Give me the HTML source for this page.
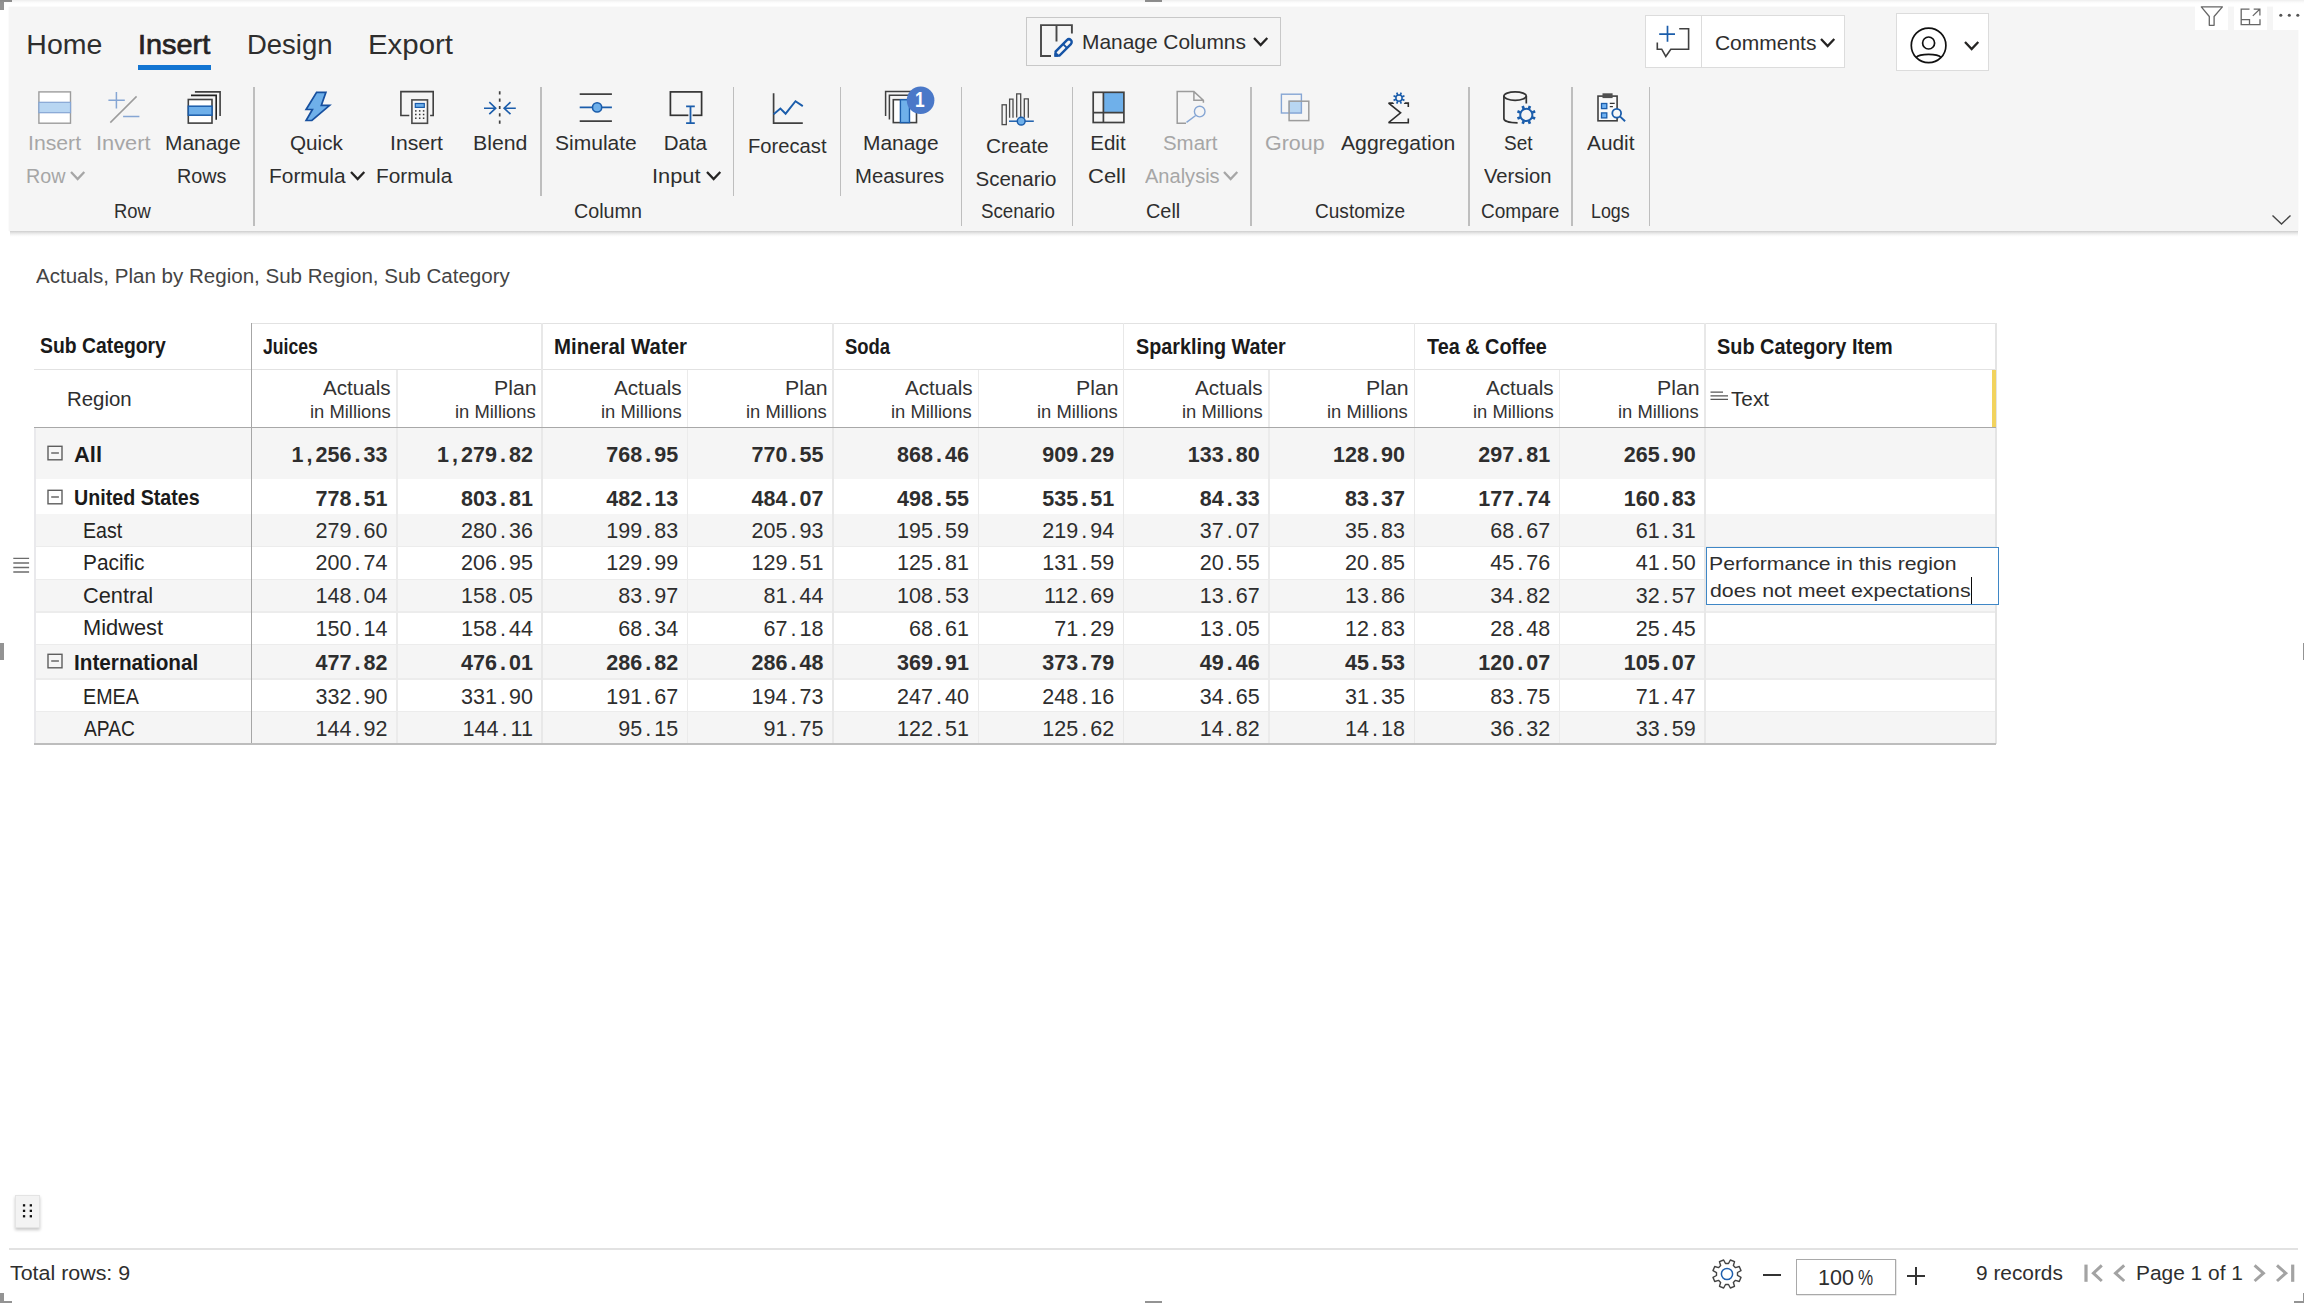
<!DOCTYPE html>
<html lang="en"><head><meta charset="utf-8"><title>Inforiver</title><style>
html,body{margin:0;padding:0;background:#fff;}
body{width:2304px;height:1303px;position:relative;overflow:hidden;font-family:"Liberation Sans",sans-serif;color:#2e2e2e;}
.t{position:absolute;white-space:pre;line-height:1;transform-origin:0 0;}
.b{position:absolute;box-sizing:border-box;}
.p{display:inline-block;width:12px;text-align:center;}
.n{position:absolute;white-space:pre;line-height:1;font-size:21.5px;text-align:right;letter-spacing:0.04px;}
.nb{font-weight:bold;}
</style></head><body>
<div class="b" style="left:0px;top:0px;width:12px;height:1.8px;background:#939393"></div>
<div class="b" style="left:0px;top:0px;width:3.8px;height:10px;background:#939393"></div>
<div class="b" style="left:1145px;top:0px;width:17px;height:2px;background:#939393"></div>
<div class="b" style="left:1145px;top:1301px;width:17px;height:2px;background:#939393"></div>
<div class="b" style="left:0px;top:643px;width:3.6px;height:17px;background:#939393"></div>
<div class="b" style="left:2303px;top:643px;width:1px;height:17px;background:#939393"></div>
<div class="b" style="left:0px;top:1301px;width:12px;height:2px;background:#939393"></div>
<div class="b" style="left:0px;top:1293px;width:3.8px;height:10px;background:#939393"></div>
<div class="b" style="left:2294.4px;top:1301px;width:9.6px;height:2px;background:#939393"></div>
<div class="b" style="left:2303px;top:1293px;width:1px;height:10px;background:#939393"></div>
<div class="b" style="left:9px;top:7px;width:2289px;height:224px;background:#f5f5f5;box-shadow:0 0 1px rgba(0,0,0,.10);"></div>
<div class="b" style="left:9.5px;top:231px;width:2288px;height:6px;background:linear-gradient(#cdcdcd,#dedede 22%,#efefef 50%,#fbfbfb 80%,#fff)"></div>
<div class="b" style="left:2195px;top:0px;width:33px;height:30px;background:#fff"></div>
<div class="b" style="left:2234px;top:0px;width:33px;height:30px;background:#fff"></div>
<div class="b" style="left:2273px;top:0px;width:31px;height:30px;background:#fff"></div>
<div class="b" style="left:0px;top:0px;width:2304px;height:4px;background:linear-gradient(rgba(0,0,0,.065),rgba(0,0,0,.02) 50%,rgba(0,0,0,0))"></div>
<span class="t" style="left:26.31px;top:30px;font-size:28.5px;">Home</span>
<span class="t" style="left:137.97px;top:30px;font-size:28.5px;color:#262322;transform:scaleX(1.0131);-webkit-text-stroke:0.7px #262322;">Insert</span>
<span class="t" style="left:247.38px;top:30px;font-size:28.5px;transform:scaleX(0.9634);">Design</span>
<span class="t" style="left:367.73px;top:30px;font-size:28.5px;transform:scaleX(1.0312);">Export</span>
<div class="b" style="left:138px;top:65px;width:73px;height:5px;background:#1375d2"></div>
<div class="b" style="left:253.2px;top:86.5px;width:1.7px;height:139.5px;background:#bebebe"></div>
<div class="b" style="left:960.7px;top:86.5px;width:1.7px;height:139.5px;background:#bebebe"></div>
<div class="b" style="left:1071.7px;top:86.5px;width:1.7px;height:139.5px;background:#bebebe"></div>
<div class="b" style="left:1250.2px;top:86.5px;width:1.7px;height:139.5px;background:#bebebe"></div>
<div class="b" style="left:1468.2px;top:86.5px;width:1.7px;height:139.5px;background:#bebebe"></div>
<div class="b" style="left:1571.2px;top:86.5px;width:1.7px;height:139.5px;background:#bebebe"></div>
<div class="b" style="left:1648.7px;top:86.5px;width:1.7px;height:139.5px;background:#bebebe"></div>
<div class="b" style="left:540.2px;top:86.5px;width:1.7px;height:109px;background:#bebebe"></div>
<div class="b" style="left:732.7px;top:86.5px;width:1.7px;height:109px;background:#bebebe"></div>
<div class="b" style="left:839.5px;top:86.5px;width:1.7px;height:109px;background:#bebebe"></div>
<span class="t" style="left:27.64px;top:133px;font-size:20.5px;color:#a6a6a6;transform:scaleX(1.0344);">Insert</span>
<span class="t" style="left:25.56px;top:166px;font-size:20.5px;color:#a6a6a6;transform:scaleX(0.9620);">Row</span>
<svg class="b" style="left:68.6px;top:169.6px" width="17.3" height="11.4" viewBox="0 0 17.3 11.4" fill="none"><path d="M2 2 L8.65 9.0 L15.3 2" stroke="#a6a6a6" stroke-width="2.3" stroke-linecap="butt" stroke-linejoin="miter"/></svg>
<span class="t" style="left:95.69px;top:133px;font-size:20.5px;color:#a6a6a6;transform:scaleX(1.0628);">Invert</span>
<span class="t" style="left:165.27px;top:133px;font-size:20.5px;transform:scaleX(1.0196);">Manage</span>
<span class="t" style="left:176.76px;top:166px;font-size:20.5px;transform:scaleX(0.9653);">Rows</span>
<span class="t" style="left:114.17px;top:201px;font-size:20.5px;transform:scaleX(0.8962);">Row</span>
<span class="t" style="left:289.99px;top:133px;font-size:20.5px;transform:scaleX(1.0078);">Quick</span>
<span class="t" style="left:268.67px;top:166px;font-size:20.5px;transform:scaleX(1.0190);">Formula</span>
<svg class="b" style="left:349.3px;top:169.6px" width="17.3" height="11.4" viewBox="0 0 17.3 11.4" fill="none"><path d="M2 2 L8.65 9.0 L15.3 2" stroke="#252423" stroke-width="2.3" stroke-linecap="butt" stroke-linejoin="miter"/></svg>
<span class="t" style="left:390.04px;top:133px;font-size:20.5px;transform:scaleX(1.0324);">Insert</span>
<span class="t" style="left:376.48px;top:166px;font-size:20.5px;transform:scaleX(1.0149);">Formula</span>
<span class="t" style="left:472.74px;top:133px;font-size:20.5px;transform:scaleX(1.0384);">Blend</span>
<span class="t" style="left:554.98px;top:133px;font-size:20.5px;transform:scaleX(1.0256);">Simulate</span>
<span class="t" style="left:663.70px;top:133px;font-size:20.5px;">Data</span>
<span class="t" style="left:651.98px;top:166px;font-size:20.5px;transform:scaleX(1.0641);">Input</span>
<svg class="b" style="left:705.0px;top:169.6px" width="17.3" height="11.4" viewBox="0 0 17.3 11.4" fill="none"><path d="M2 2 L8.65 9.0 L15.3 2" stroke="#252423" stroke-width="2.3" stroke-linecap="butt" stroke-linejoin="miter"/></svg>
<span class="t" style="left:574.34px;top:201px;font-size:20.5px;transform:scaleX(0.9605);">Column</span>
<span class="t" style="left:747.82px;top:136px;font-size:20.5px;transform:scaleX(0.9846);">Forecast</span>
<span class="t" style="left:863.17px;top:133px;font-size:20.5px;transform:scaleX(1.0209);">Manage</span>
<span class="t" style="left:854.81px;top:166px;font-size:20.5px;transform:scaleX(0.9909);">Measures</span>
<span class="t" style="left:986.28px;top:136px;font-size:20.5px;transform:scaleX(1.0168);">Create</span>
<span class="t" style="left:975.50px;top:169px;font-size:20.5px;">Scenario</span>
<span class="t" style="left:980.58px;top:201px;font-size:20.5px;transform:scaleX(0.9141);">Scenario</span>
<span class="t" style="left:1090.30px;top:133px;font-size:20.5px;">Edit</span>
<span class="t" style="left:1087.83px;top:166px;font-size:20.5px;transform:scaleX(1.0727);">Cell</span>
<span class="t" style="left:1145.83px;top:201px;font-size:20.5px;transform:scaleX(0.9697);">Cell</span>
<span class="t" style="left:1163.00px;top:133px;font-size:20.5px;color:#a6a6a6;transform:scaleX(0.9963);">Smart</span>
<span class="t" style="left:1145.30px;top:166px;font-size:20.5px;color:#a6a6a6;transform:scaleX(0.9775);">Analysis</span>
<svg class="b" style="left:1222.2px;top:169.6px" width="17.3" height="11.4" viewBox="0 0 17.3 11.4" fill="none"><path d="M2 2 L8.65 9.0 L15.3 2" stroke="#a6a6a6" stroke-width="2.3" stroke-linecap="butt" stroke-linejoin="miter"/></svg>
<span class="t" style="left:1265.35px;top:133px;font-size:20.5px;color:#a6a6a6;transform:scaleX(1.0453);">Group</span>
<span class="t" style="left:1341.40px;top:133px;font-size:20.5px;transform:scaleX(1.0329);">Aggregation</span>
<span class="t" style="left:1315.47px;top:201px;font-size:20.5px;transform:scaleX(0.9294);">Customize</span>
<span class="t" style="left:1504.47px;top:133px;font-size:20.5px;transform:scaleX(0.9262);">Set</span>
<span class="t" style="left:1484.30px;top:166px;font-size:20.5px;transform:scaleX(0.9851);">Version</span>
<span class="t" style="left:1481.37px;top:201px;font-size:20.5px;transform:scaleX(0.9284);">Compare</span>
<span class="t" style="left:1587.30px;top:133px;font-size:20.5px;transform:scaleX(1.0150);">Audit</span>
<span class="t" style="left:1591.21px;top:201px;font-size:20.5px;transform:scaleX(0.8697);">Logs</span>
<div class="b" style="left:1026px;top:16.5px;width:254.5px;height:49.5px;border:1px solid #c8c8c8;background:#f5f5f5"></div>
<span class="t" style="left:1082.21px;top:31px;font-size:21px;transform:scaleX(0.9957);">Manage Columns</span>
<svg class="b" style="left:1252.2px;top:35.5px" width="17.3" height="11.4" viewBox="0 0 17.3 11.4" fill="none"><path d="M2 2 L8.65 9.0 L15.3 2" stroke="#252423" stroke-width="2.3" stroke-linecap="butt" stroke-linejoin="miter"/></svg>
<div class="b" style="left:1645.2px;top:15.3px;width:199.8px;height:53px;border:1px solid #dcdcdc;background:#fff"></div>
<div class="b" style="left:1701px;top:16px;width:1.2px;height:51.5px;background:#dcdcdc"></div>
<span class="t" style="left:1714.90px;top:32px;font-size:21px;">Comments</span>
<svg class="b" style="left:1819.3px;top:37.3px" width="17.3" height="11.4" viewBox="0 0 17.3 11.4" fill="none"><path d="M2 2 L8.65 9.0 L15.3 2" stroke="#252423" stroke-width="2.3" stroke-linecap="butt" stroke-linejoin="miter"/></svg>
<div class="b" style="left:1896px;top:13.2px;width:93px;height:57.4px;border:1px solid #dcdcdc;background:#fff"></div>
<svg class="b" style="left:1963.0px;top:39.7px" width="17.3" height="11.4" viewBox="0 0 17.3 11.4" fill="none"><path d="M2 2 L8.65 9.0 L15.3 2" stroke="#252423" stroke-width="2.3" stroke-linecap="butt" stroke-linejoin="miter"/></svg>
<svg class="b" style="left:2270px;top:212px" width="24" height="16" viewBox="0 0 24 16" fill="none"><path d="M2.5 3.5 L11.5 12 L20.5 3.5" stroke="#444" stroke-width="1.4"/></svg>
<svg class="b" style="left:0px;top:0px" width="2304" height="240" viewBox="0 0 2304 240" fill="none"><rect x="38.9" y="91.9" width="31.6" height="31.3" stroke="#9c9c9c" stroke-width="1.4" fill="#fff"/><rect x="38.9" y="102.3" width="31.6" height="10.4" stroke="#86a6d4" stroke-width="1.2" fill="#b8d6f2"/><path d="M108.4 100.2H124.8 M116.4 92.1V108.5 M123.1 116.6H139.4" stroke="#86a6d4" stroke-width="1.5" fill="none" /><path d="M110.3 122.6L136.6 96.4" stroke="#9c9c9c" stroke-width="1.5" fill="none" /><path d="M194.9 91.9H220.1V116.1" stroke="#404040" stroke-width="1.6" fill="none" /><path d="M191 95.4H216.2V119.8" stroke="#222" stroke-width="1.6" fill="none" /><rect x="188.3" y="99.5" width="23.7" height="23.6" stroke="#404040" stroke-width="1.6" fill="#fff"/><rect x="188.3" y="106.2" width="23.7" height="9.0" stroke="#1b5dab" stroke-width="1.5" fill="#6fb0ea"/><path d="M316.6 92.3H325.9L321.3 105.4H329.6L311.9 120.5H306.1L312.4 109.5H306.1Z" stroke="#17509f" stroke-width="1.7" fill="#6fb0ea" stroke-linejoin="miter"/><path d="M409.3 115.5H400.9V91.6H433.2V115.5H430.1" stroke="#404040" stroke-width="1.6" fill="none" /><rect x="411.9" y="99.9" width="15.6" height="23.4" stroke="#4a4a4a" stroke-width="1.6" fill="#f7f7f7"/><rect x="415.3" y="103.5" width="9.0" height="3.9" stroke="#1b5dab" stroke-width="1.2" fill="#6fb0ea"/><rect x="415.05" y="110.15" width="1.5" height="1.5" fill="#333"/><rect x="415.05" y="113.75" width="1.5" height="1.5" fill="#333"/><rect x="415.05" y="117.45" width="1.5" height="1.5" fill="#333"/><rect x="418.95" y="110.15" width="1.5" height="1.5" fill="#333"/><rect x="418.95" y="113.75" width="1.5" height="1.5" fill="#333"/><rect x="418.95" y="117.45" width="1.5" height="1.5" fill="#333"/><rect x="422.85" y="110.15" width="1.5" height="1.5" fill="#333"/><rect x="422.85" y="113.75" width="1.5" height="1.5" fill="#333"/><rect x="422.85" y="117.45" width="1.5" height="1.5" fill="#333"/><path d="M499.7 91.3V123.8" stroke="#404040" stroke-width="1.7" fill="none" stroke-dasharray="3.2 4.1"/><path d="M484 108.2H495.5 M489.3 102.2L495.7 108.2L489.3 114.2" stroke="#1b5dab" stroke-width="1.6" fill="none" /><path d="M515.8 108.2H504.3 M510.5 102.2L504.1 108.2L510.5 114.2" stroke="#1b5dab" stroke-width="1.6" fill="none" /><path d="M579.7 94.1H611.9 M579.7 121.2H611.9" stroke="#404040" stroke-width="1.7" fill="none" /><path d="M579.7 107.4H611.9" stroke="#1b5dab" stroke-width="1.6" fill="none" /><circle cx="597.1" cy="107.4" r="4.6" stroke="#1b5dab" stroke-width="1.6" fill="#6fb0ea"/><rect x="670.4" y="91.9" width="31.2" height="23.4" stroke="#333" stroke-width="1.7" fill="none"/><path d="M686.1 106.4H694.8 M686.1 123.1H694.8 M690.5 106.4V123.1" stroke="#f5f5f5" stroke-width="4.2" fill="none" /><path d="M686.1 106.4H694.8 M686.1 123.1H694.8 M690.5 106.4V123.1" stroke="#1b5dab" stroke-width="1.8" fill="none" /><path d="M773.6 93.2V123.1H802.8" stroke="#404040" stroke-width="1.7" fill="none" /><path d="M773.6 114.2L780.4 108.5L785.6 113.7L795.5 101.2L802.8 106.1" stroke="#1b5dab" stroke-width="1.9" fill="none" /><path d="M885.6 115.9V91.4H912" stroke="#404040" stroke-width="1.5" fill="none" /><path d="M889.4 119.5V95.3H914" stroke="#404040" stroke-width="1.5" fill="none" /><rect x="893.3" y="99.7" width="23.2" height="22.9" stroke="#404040" stroke-width="1.6" fill="#fff"/><rect x="900.4" y="99.7" width="9.1" height="22.9" stroke="#1b5dab" stroke-width="1.4" fill="#6fb0ea"/><circle cx="920.6" cy="100.3" r="13.8" stroke="none" stroke-width="0" fill="#4a78c8"/><rect x="1002.1" y="104.8" width="4.2" height="19.8" stroke="#4a4a4a" stroke-width="1.3" fill="none"/><path d="M1009.6 117.8V99.2H1013.0V117.8 M1016.7 117.5V93.9H1020.7V117.5 M1024.3 117.8V98.9H1028.3V117.8" stroke="#4a4a4a" stroke-width="1.3" fill="none" /><path d="M1009 121.2H1033.8" stroke="#1b5dab" stroke-width="1.5" fill="none" /><circle cx="1021.2" cy="121.2" r="3.9" stroke="#1b5dab" stroke-width="1.5" fill="#6fb0ea"/><rect x="1104.0" y="92.2" width="19.8" height="20.0" stroke="none" stroke-width="0" fill="#6fb0ea"/><rect x="1093.2" y="92.3" width="30.7" height="30.2" stroke="#404040" stroke-width="1.7" fill="none"/><path d="M1103.4 92.3V122.5 M1093.2 112.7H1123.9" stroke="#404040" stroke-width="1.7" fill="none" /><path d="M1186 123.2H1177.2V91.6H1193.9L1203.4 100.3V102.8 M1193.9 91.6V100.3H1203.4" stroke="#9c9c9c" stroke-width="1.5" fill="none" /><circle cx="1199.7" cy="111.6" r="5.3" stroke="#86a6d4" stroke-width="1.4" fill="none"/><path d="M1195.7 115.5L1186.5 122.4" stroke="#86a6d4" stroke-width="1.5" fill="none" /><rect x="1288.4" y="100.5" width="13.6" height="13.1" stroke="none" stroke-width="0" fill="#b8d6f2"/><rect x="1281.4" y="94.2" width="20.0" height="18.8" stroke="#86a6d4" stroke-width="1.4" fill="none"/><rect x="1289.1" y="101.2" width="19.7" height="19.4" stroke="#9c9c9c" stroke-width="1.5" fill="none"/><path d="M1408.3 106.9V103.1H1388.6L1400.6 112.8L1388.6 122.7H1408.3V118.4" stroke="#2e2e2e" stroke-width="1.6" fill="none" stroke-linejoin="miter" stroke-miterlimit="2.2"/><circle cx="1399" cy="98.1" r="7.4" stroke="none" stroke-width="0" fill="#f5f5f5"/><path d="M1401.96 99.32L1404.45 100.36M1400.22 101.06L1401.26 103.55M1397.78 101.06L1396.74 103.55M1396.04 99.32L1393.55 100.36M1396.04 96.88L1393.55 95.84M1397.78 95.14L1396.74 92.65M1400.22 95.14L1401.26 92.65M1401.96 96.88L1404.45 95.84" stroke="#1b5dab" stroke-width="1.7" fill="none" /><circle cx="1399" cy="98.1" r="3.1" stroke="#1b5dab" stroke-width="1.5" fill="#f5f5f5"/><ellipse cx="1515.1" cy="96.1" rx="11.2" ry="4.2" stroke="#333" stroke-width="1.7" fill="none"/><path d="M1503.9 96.1V118.6C1503.9 121 1509 122.9 1517.6 122.9 M1526.3 96.1V103.6" stroke="#333" stroke-width="1.7" fill="none" /><path d="M1532.31 117.39L1535.17 118.57M1528.79 120.91L1529.97 123.77M1523.81 120.91L1522.63 123.77M1520.29 117.39L1517.43 118.57M1520.29 112.41L1517.43 111.23M1523.81 108.89L1522.63 106.03M1528.79 108.89L1529.97 106.03M1532.31 112.41L1535.17 111.23" stroke="#1b5dab" stroke-width="2.7" fill="none" /><circle cx="1526.3" cy="114.9" r="6.1" stroke="#1b5dab" stroke-width="2.0" fill="#f5f5f5"/><rect x="1598.0" y="96.1" width="19.1" height="24.7" stroke="#404040" stroke-width="1.6" fill="#fafafa"/><rect x="1602.5" y="93.3" width="10.1" height="4.8" stroke="none" stroke-width="0" fill="#505050"/><rect x="1601.5" y="103.5" width="5.3" height="5.1" stroke="#1b5dab" stroke-width="1.3" fill="#70b2f2"/><rect x="1601.5" y="112.9" width="5.3" height="5.0" stroke="#1b5dab" stroke-width="1.3" fill="#70b2f2"/><path d="M1609.8 103.3H1614.7 M1609.8 106.7H1612.9" stroke="#333" stroke-width="1.3" fill="none" /><circle cx="1616.7" cy="113.2" r="4.4" stroke="#1b5dab" stroke-width="1.8" fill="#f7f7f7"/><path d="M1619.9 116.4L1625.1 121.3" stroke="#1b5dab" stroke-width="1.9" fill="none" /><path d="M1051 56.05H1041V25.15H1071.9V33.6 M1056.5 25.15V41.6" stroke="#484848" stroke-width="1.9" fill="none" /><path d="M1055.6 51.6V55.6H1059.5L1070.88 44.08A2.8 2.8 0 0 0 1066.92 40.12Z" stroke="#1553a5" stroke-width="2.4" fill="#f5f5f5" stroke-linejoin="miter"/><path d="M1055.9 53.2V55.3H1058.2" stroke="#1553a5" stroke-width="3.0" fill="none" /><path d="M1062.9 43.9L1066.9 47.9" stroke="#1553a5" stroke-width="2.0" fill="none" /><path d="M1659.2 34.2H1675 M1667.5 25.8V41.7" stroke="#1b5dab" stroke-width="1.7" fill="none" /><path d="M1679.2 28.8H1688.6V49.2H1670.8L1665.8 56.4L1661.7 49.2H1657.3V42.5" stroke="#404040" stroke-width="1.6" fill="none" stroke-linejoin="miter"/><circle cx="1928.6" cy="45.4" r="17.3" stroke="#111" stroke-width="1.7" fill="none"/><circle cx="1928.6" cy="43.0" r="6.0" stroke="#111" stroke-width="1.7" fill="none"/><path d="M1916.2 57.4C1920 53.4 1937.2 53.4 1941 57.4" stroke="#111" stroke-width="1.7" fill="none" /><path d="M2201.3 6.9H2222.4L2214.1 16.5V25.3H2209.3V16.5Z" stroke="#666" stroke-width="1.3" fill="none" stroke-linejoin="round"/><path d="M2249.5 9.1H2241.2V24.7H2260.0V19.2 M2241.2 19.6H2249.5V24.7" stroke="#666" stroke-width="1.3" fill="none" /><path d="M2252.8 15.9L2259.7 9.3 M2253.7 9.2H2259.9V15.4" stroke="#666" stroke-width="1.2" fill="none" /><circle cx="2280.8" cy="15.3" r="1.55" fill="#555"/><circle cx="2289.3" cy="15.3" r="1.55" fill="#555"/><circle cx="2297.8" cy="15.3" r="1.55" fill="#555"/></svg>
<span class="t" style="left:915.48px;top:89px;font-size:22px;font-weight:bold;color:#fff;transform:scaleX(0.7885);">1</span>
<span class="t" style="left:35.70px;top:267px;font-size:19.5px;color:#444444;transform:scaleX(1.0533);">Actuals, Plan by Region, Sub Region, Sub Category</span>
<div class="b" style="left:34.3px;top:428.0px;width:1961.9px;height:50.8px;background:#f5f5f5"></div>
<div class="b" style="left:34.3px;top:514.2px;width:1961.9px;height:32.6px;background:#f5f5f5"></div>
<div class="b" style="left:34.3px;top:579.2px;width:1961.9px;height:32.8px;background:#f5f5f5"></div>
<div class="b" style="left:34.3px;top:644.8px;width:1961.9px;height:34.2px;background:#f5f5f5"></div>
<div class="b" style="left:34.3px;top:711.2px;width:1961.9px;height:32.3px;background:#f5f5f5"></div>
<div class="b" style="left:34.3px;top:546.1999999999999px;width:1961.9px;height:1.2px;background:#ececec"></div>
<div class="b" style="left:34.3px;top:578.6px;width:1961.9px;height:1.2px;background:#ececec"></div>
<div class="b" style="left:34.3px;top:611.4px;width:1961.9px;height:1.2px;background:#ececec"></div>
<div class="b" style="left:34.3px;top:644.1999999999999px;width:1961.9px;height:1.2px;background:#ececec"></div>
<div class="b" style="left:34.3px;top:678.4px;width:1961.9px;height:1.2px;background:#ececec"></div>
<div class="b" style="left:34.3px;top:710.6px;width:1961.9px;height:1.2px;background:#ececec"></div>
<div class="b" style="left:251.5px;top:323.0px;width:1744.7px;height:1.3px;background:#e2e2e2"></div>
<div class="b" style="left:34.3px;top:369.0px;width:1961.9px;height:1.3px;background:#e2e2e2"></div>
<div class="b" style="left:396.1px;top:369.5px;width:1.5px;height:374.5px;background:#ebebeb"></div>
<div class="b" style="left:541.45px;top:323.0px;width:1.5px;height:421.0px;background:#e8e8e8"></div>
<div class="b" style="left:686.8px;top:369.5px;width:1.5px;height:374.5px;background:#ebebeb"></div>
<div class="b" style="left:832.15px;top:323.0px;width:1.5px;height:421.0px;background:#e8e8e8"></div>
<div class="b" style="left:977.5px;top:369.5px;width:1.5px;height:374.5px;background:#ebebeb"></div>
<div class="b" style="left:1122.85px;top:323.0px;width:1.5px;height:421.0px;background:#e8e8e8"></div>
<div class="b" style="left:1268.2px;top:369.5px;width:1.5px;height:374.5px;background:#ebebeb"></div>
<div class="b" style="left:1413.55px;top:323.0px;width:1.5px;height:421.0px;background:#e8e8e8"></div>
<div class="b" style="left:1558.9px;top:369.5px;width:1.5px;height:374.5px;background:#ebebeb"></div>
<div class="b" style="left:1704.25px;top:323.0px;width:1.5px;height:421.0px;background:#e8e8e8"></div>
<div class="b" style="left:1995.45px;top:323.0px;width:1.5px;height:421.0px;background:#e4e4e4"></div>
<div class="b" style="left:34.3px;top:428px;width:1.3px;height:316px;background:#e9e9ec"></div>
<div class="b" style="left:250.9px;top:323.0px;width:1.3px;height:421.0px;background:#a6a6a6"></div>
<div class="b" style="left:34.3px;top:427.0px;width:1961.9px;height:1.3px;background:#a8a8a8"></div>
<div class="b" style="left:34.3px;top:743.2px;width:1961.9px;height:1.5px;background:#bdbdbd"></div>
<div class="b" style="left:1991.5px;top:370.3px;width:4.2px;height:56.7px;background:#f2d35e"></div>
<span class="t" style="left:40.07px;top:335px;font-size:22px;font-weight:bold;color:#1a1a1a;transform:scaleX(0.8799);">Sub Category</span>
<span class="t" style="left:262.86px;top:336px;font-size:22px;font-weight:bold;color:#1a1a1a;transform:scaleX(0.8012);">Juices</span>
<span class="t" style="left:553.80px;top:336px;font-size:22px;font-weight:bold;color:#1a1a1a;transform:scaleX(0.9274);">Mineral Water</span>
<span class="t" style="left:845.10px;top:336px;font-size:22px;font-weight:bold;color:#1a1a1a;transform:scaleX(0.8390);">Soda</span>
<span class="t" style="left:1135.86px;top:336px;font-size:22px;font-weight:bold;color:#1a1a1a;transform:scaleX(0.8987);">Sparkling Water</span>
<span class="t" style="left:1426.72px;top:336px;font-size:22px;font-weight:bold;color:#1a1a1a;transform:scaleX(0.9022);">Tea &amp; Coffee</span>
<span class="t" style="left:1717.06px;top:336px;font-size:22px;font-weight:bold;color:#1a1a1a;transform:scaleX(0.9044);">Sub Category Item</span>
<span class="t" style="left:66.95px;top:388px;font-size:21px;transform:scaleX(0.9717);">Region</span>
<span class="t" style="left:323.15px;top:378px;font-size:20.5px;color:#333;transform:scaleX(1.0060);">Actuals</span>
<span class="t" style="left:309.99px;top:404px;font-size:17.5px;color:#333;transform:scaleX(1.0505);">in Millions</span>
<span class="t" style="left:494.34px;top:378px;font-size:20.5px;color:#333;transform:scaleX(1.0367);">Plan</span>
<span class="t" style="left:455.34px;top:404px;font-size:17.5px;color:#333;transform:scaleX(1.0505);">in Millions</span>
<span class="t" style="left:613.85px;top:378px;font-size:20.5px;color:#333;transform:scaleX(1.0060);">Actuals</span>
<span class="t" style="left:600.69px;top:404px;font-size:17.5px;color:#333;transform:scaleX(1.0505);">in Millions</span>
<span class="t" style="left:785.04px;top:378px;font-size:20.5px;color:#333;transform:scaleX(1.0367);">Plan</span>
<span class="t" style="left:746.04px;top:404px;font-size:17.5px;color:#333;transform:scaleX(1.0505);">in Millions</span>
<span class="t" style="left:904.55px;top:378px;font-size:20.5px;color:#333;transform:scaleX(1.0060);">Actuals</span>
<span class="t" style="left:891.39px;top:404px;font-size:17.5px;color:#333;transform:scaleX(1.0505);">in Millions</span>
<span class="t" style="left:1075.74px;top:378px;font-size:20.5px;color:#333;transform:scaleX(1.0367);">Plan</span>
<span class="t" style="left:1036.74px;top:404px;font-size:17.5px;color:#333;transform:scaleX(1.0505);">in Millions</span>
<span class="t" style="left:1195.25px;top:378px;font-size:20.5px;color:#333;transform:scaleX(1.0060);">Actuals</span>
<span class="t" style="left:1182.09px;top:404px;font-size:17.5px;color:#333;transform:scaleX(1.0505);">in Millions</span>
<span class="t" style="left:1366.44px;top:378px;font-size:20.5px;color:#333;transform:scaleX(1.0367);">Plan</span>
<span class="t" style="left:1327.44px;top:404px;font-size:17.5px;color:#333;transform:scaleX(1.0505);">in Millions</span>
<span class="t" style="left:1485.95px;top:378px;font-size:20.5px;color:#333;transform:scaleX(1.0060);">Actuals</span>
<span class="t" style="left:1472.79px;top:404px;font-size:17.5px;color:#333;transform:scaleX(1.0505);">in Millions</span>
<span class="t" style="left:1657.14px;top:378px;font-size:20.5px;color:#333;transform:scaleX(1.0367);">Plan</span>
<span class="t" style="left:1618.14px;top:404px;font-size:17.5px;color:#333;transform:scaleX(1.0505);">in Millions</span>
<svg class="b" style="left:1709px;top:389px" width="20" height="14" viewBox="0 0 20 14" fill="none"><path d="M1.5 3.2H14 M1.5 6.8H19 M1.5 10.4H19" stroke="#555" stroke-width="1.3"/></svg>
<span class="t" style="left:1730.71px;top:388px;font-size:21px;transform:scaleX(0.9868);">Text</span>
<svg class="b" style="left:46.9px;top:444.7px" width="17" height="17" viewBox="0 0 17 17" fill="none"><rect x="1.0" y="1.3" width="14.0" height="13.5" stroke="#5e5e5e" stroke-width="1.4"/><path d="M4.2 8.0H11.9" stroke="#5e5e5e" stroke-width="1.4"/></svg>
<svg class="b" style="left:46.9px;top:488.6px" width="17" height="17" viewBox="0 0 17 17" fill="none"><rect x="1.0" y="1.3" width="14.0" height="13.5" stroke="#5e5e5e" stroke-width="1.4"/><path d="M4.2 8.0H11.9" stroke="#5e5e5e" stroke-width="1.4"/></svg>
<svg class="b" style="left:46.9px;top:653.1px" width="17" height="17" viewBox="0 0 17 17" fill="none"><rect x="1.0" y="1.3" width="14.0" height="13.5" stroke="#5e5e5e" stroke-width="1.4"/><path d="M4.2 8.0H11.9" stroke="#5e5e5e" stroke-width="1.4"/></svg>
<span class="t" style="left:74.09px;top:445px;font-size:21.5px;font-weight:bold;color:#1a1a1a;transform:scaleX(1.0196);">All</span>
<span class="t" style="left:73.90px;top:488px;font-size:21.5px;font-weight:bold;color:#1a1a1a;transform:scaleX(0.9150);">United States</span>
<span class="t" style="left:82.85px;top:521px;font-size:21.5px;color:#252423;transform:scaleX(0.9102);">East</span>
<span class="t" style="left:82.95px;top:553px;font-size:21.5px;color:#252423;transform:scaleX(0.9689);">Pacific</span>
<span class="t" style="left:82.59px;top:586px;font-size:21.5px;color:#252423;transform:scaleX(1.0120);">Central</span>
<span class="t" style="left:82.87px;top:618px;font-size:21.5px;color:#252423;transform:scaleX(1.0156);">Midwest</span>
<span class="t" style="left:73.75px;top:653px;font-size:21.5px;font-weight:bold;color:#1a1a1a;transform:scaleX(0.9635);">International</span>
<span class="t" style="left:82.84px;top:687px;font-size:21.5px;color:#252423;transform:scaleX(0.9155);">EMEA</span>
<span class="t" style="left:83.60px;top:719px;font-size:21.5px;color:#252423;transform:scaleX(0.8932);">APAC</span>
<span class="n nb" style="left:257.55px;width:130px;top:445px">1<span class="p">,</span>256<span class="p">.</span>33</span>
<span class="n nb" style="left:402.90px;width:130px;top:445px">1<span class="p">,</span>279<span class="p">.</span>82</span>
<span class="n nb" style="left:548.25px;width:130px;top:445px">768<span class="p">.</span>95</span>
<span class="n nb" style="left:693.60px;width:130px;top:445px">770<span class="p">.</span>55</span>
<span class="n nb" style="left:838.95px;width:130px;top:445px">868<span class="p">.</span>46</span>
<span class="n nb" style="left:984.30px;width:130px;top:445px">909<span class="p">.</span>29</span>
<span class="n nb" style="left:1129.65px;width:130px;top:445px">133<span class="p">.</span>80</span>
<span class="n nb" style="left:1275.00px;width:130px;top:445px">128<span class="p">.</span>90</span>
<span class="n nb" style="left:1420.35px;width:130px;top:445px">297<span class="p">.</span>81</span>
<span class="n nb" style="left:1565.70px;width:130px;top:445px">265<span class="p">.</span>90</span>
<span class="n nb" style="left:257.55px;width:130px;top:489px">778<span class="p">.</span>51</span>
<span class="n nb" style="left:402.90px;width:130px;top:489px">803<span class="p">.</span>81</span>
<span class="n nb" style="left:548.25px;width:130px;top:489px">482<span class="p">.</span>13</span>
<span class="n nb" style="left:693.60px;width:130px;top:489px">484<span class="p">.</span>07</span>
<span class="n nb" style="left:838.95px;width:130px;top:489px">498<span class="p">.</span>55</span>
<span class="n nb" style="left:984.30px;width:130px;top:489px">535<span class="p">.</span>51</span>
<span class="n nb" style="left:1129.65px;width:130px;top:489px">84<span class="p">.</span>33</span>
<span class="n nb" style="left:1275.00px;width:130px;top:489px">83<span class="p">.</span>37</span>
<span class="n nb" style="left:1420.35px;width:130px;top:489px">177<span class="p">.</span>74</span>
<span class="n nb" style="left:1565.70px;width:130px;top:489px">160<span class="p">.</span>83</span>
<span class="n" style="left:257.55px;width:130px;top:521px">279<span class="p">.</span>60</span>
<span class="n" style="left:402.90px;width:130px;top:521px">280<span class="p">.</span>36</span>
<span class="n" style="left:548.25px;width:130px;top:521px">199<span class="p">.</span>83</span>
<span class="n" style="left:693.60px;width:130px;top:521px">205<span class="p">.</span>93</span>
<span class="n" style="left:838.95px;width:130px;top:521px">195<span class="p">.</span>59</span>
<span class="n" style="left:984.30px;width:130px;top:521px">219<span class="p">.</span>94</span>
<span class="n" style="left:1129.65px;width:130px;top:521px">37<span class="p">.</span>07</span>
<span class="n" style="left:1275.00px;width:130px;top:521px">35<span class="p">.</span>83</span>
<span class="n" style="left:1420.35px;width:130px;top:521px">68<span class="p">.</span>67</span>
<span class="n" style="left:1565.70px;width:130px;top:521px">61<span class="p">.</span>31</span>
<span class="n" style="left:257.55px;width:130px;top:553px">200<span class="p">.</span>74</span>
<span class="n" style="left:402.90px;width:130px;top:553px">206<span class="p">.</span>95</span>
<span class="n" style="left:548.25px;width:130px;top:553px">129<span class="p">.</span>99</span>
<span class="n" style="left:693.60px;width:130px;top:553px">129<span class="p">.</span>51</span>
<span class="n" style="left:838.95px;width:130px;top:553px">125<span class="p">.</span>81</span>
<span class="n" style="left:984.30px;width:130px;top:553px">131<span class="p">.</span>59</span>
<span class="n" style="left:1129.65px;width:130px;top:553px">20<span class="p">.</span>55</span>
<span class="n" style="left:1275.00px;width:130px;top:553px">20<span class="p">.</span>85</span>
<span class="n" style="left:1420.35px;width:130px;top:553px">45<span class="p">.</span>76</span>
<span class="n" style="left:1565.70px;width:130px;top:553px">41<span class="p">.</span>50</span>
<span class="n" style="left:257.55px;width:130px;top:586px">148<span class="p">.</span>04</span>
<span class="n" style="left:402.90px;width:130px;top:586px">158<span class="p">.</span>05</span>
<span class="n" style="left:548.25px;width:130px;top:586px">83<span class="p">.</span>97</span>
<span class="n" style="left:693.60px;width:130px;top:586px">81<span class="p">.</span>44</span>
<span class="n" style="left:838.95px;width:130px;top:586px">108<span class="p">.</span>53</span>
<span class="n" style="left:984.30px;width:130px;top:586px">112<span class="p">.</span>69</span>
<span class="n" style="left:1129.65px;width:130px;top:586px">13<span class="p">.</span>67</span>
<span class="n" style="left:1275.00px;width:130px;top:586px">13<span class="p">.</span>86</span>
<span class="n" style="left:1420.35px;width:130px;top:586px">34<span class="p">.</span>82</span>
<span class="n" style="left:1565.70px;width:130px;top:586px">32<span class="p">.</span>57</span>
<span class="n" style="left:257.55px;width:130px;top:619px">150<span class="p">.</span>14</span>
<span class="n" style="left:402.90px;width:130px;top:619px">158<span class="p">.</span>44</span>
<span class="n" style="left:548.25px;width:130px;top:619px">68<span class="p">.</span>34</span>
<span class="n" style="left:693.60px;width:130px;top:619px">67<span class="p">.</span>18</span>
<span class="n" style="left:838.95px;width:130px;top:619px">68<span class="p">.</span>61</span>
<span class="n" style="left:984.30px;width:130px;top:619px">71<span class="p">.</span>29</span>
<span class="n" style="left:1129.65px;width:130px;top:619px">13<span class="p">.</span>05</span>
<span class="n" style="left:1275.00px;width:130px;top:619px">12<span class="p">.</span>83</span>
<span class="n" style="left:1420.35px;width:130px;top:619px">28<span class="p">.</span>48</span>
<span class="n" style="left:1565.70px;width:130px;top:619px">25<span class="p">.</span>45</span>
<span class="n nb" style="left:257.55px;width:130px;top:653px">477<span class="p">.</span>82</span>
<span class="n nb" style="left:402.90px;width:130px;top:653px">476<span class="p">.</span>01</span>
<span class="n nb" style="left:548.25px;width:130px;top:653px">286<span class="p">.</span>82</span>
<span class="n nb" style="left:693.60px;width:130px;top:653px">286<span class="p">.</span>48</span>
<span class="n nb" style="left:838.95px;width:130px;top:653px">369<span class="p">.</span>91</span>
<span class="n nb" style="left:984.30px;width:130px;top:653px">373<span class="p">.</span>79</span>
<span class="n nb" style="left:1129.65px;width:130px;top:653px">49<span class="p">.</span>46</span>
<span class="n nb" style="left:1275.00px;width:130px;top:653px">45<span class="p">.</span>53</span>
<span class="n nb" style="left:1420.35px;width:130px;top:653px">120<span class="p">.</span>07</span>
<span class="n nb" style="left:1565.70px;width:130px;top:653px">105<span class="p">.</span>07</span>
<span class="n" style="left:257.55px;width:130px;top:687px">332<span class="p">.</span>90</span>
<span class="n" style="left:402.90px;width:130px;top:687px">331<span class="p">.</span>90</span>
<span class="n" style="left:548.25px;width:130px;top:687px">191<span class="p">.</span>67</span>
<span class="n" style="left:693.60px;width:130px;top:687px">194<span class="p">.</span>73</span>
<span class="n" style="left:838.95px;width:130px;top:687px">247<span class="p">.</span>40</span>
<span class="n" style="left:984.30px;width:130px;top:687px">248<span class="p">.</span>16</span>
<span class="n" style="left:1129.65px;width:130px;top:687px">34<span class="p">.</span>65</span>
<span class="n" style="left:1275.00px;width:130px;top:687px">31<span class="p">.</span>35</span>
<span class="n" style="left:1420.35px;width:130px;top:687px">83<span class="p">.</span>75</span>
<span class="n" style="left:1565.70px;width:130px;top:687px">71<span class="p">.</span>47</span>
<span class="n" style="left:257.55px;width:130px;top:719px">144<span class="p">.</span>92</span>
<span class="n" style="left:402.90px;width:130px;top:719px">144<span class="p">.</span>11</span>
<span class="n" style="left:548.25px;width:130px;top:719px">95<span class="p">.</span>15</span>
<span class="n" style="left:693.60px;width:130px;top:719px">91<span class="p">.</span>75</span>
<span class="n" style="left:838.95px;width:130px;top:719px">122<span class="p">.</span>51</span>
<span class="n" style="left:984.30px;width:130px;top:719px">125<span class="p">.</span>62</span>
<span class="n" style="left:1129.65px;width:130px;top:719px">14<span class="p">.</span>82</span>
<span class="n" style="left:1275.00px;width:130px;top:719px">14<span class="p">.</span>18</span>
<span class="n" style="left:1420.35px;width:130px;top:719px">36<span class="p">.</span>32</span>
<span class="n" style="left:1565.70px;width:130px;top:719px">33<span class="p">.</span>59</span>
<div class="b" style="left:1706px;top:547px;width:293px;height:58px;border:1.3px solid #3f87c6;background:#fff"></div>
<span class="t" style="left:1708.63px;top:554px;font-size:19px;transform:scaleX(1.1164);">Performance in this region</span>
<span class="t" style="left:1709.51px;top:581px;font-size:19px;transform:scaleX(1.1216);">does not meet expectations</span>
<div class="b" style="left:1970.5px;top:576.5px;width:1.7px;height:27.2px;background:#0a0a0a"></div>
<svg class="b" style="left:12px;top:556px" width="20" height="18" viewBox="0 0 20 18" fill="none"><path d="M1.3 2.4H17.1 M1.3 7.0H17.1 M1.3 11.5H17.1 M1.3 16.0H17.1" stroke="#6c6c6c" stroke-width="1.3"/></svg>
<div class="b" style="left:9px;top:1248.4px;width:2289px;height:1.3px;background:#e2e2e2"></div>
<span class="t" style="left:9.98px;top:1263px;font-size:20.5px;transform:scaleX(1.0439);">Total rows: 9</span>
<div class="b" style="left:15px;top:1194.5px;width:24.5px;height:33.5px;background:#f3f3f3;border:1px solid #e4e4e4;box-shadow:0 2px 3px rgba(0,0,0,.22)"></div>
<svg class="b" style="left:15px;top:1194px" width="25" height="34" viewBox="0 0 25 34" fill="none"><rect x="7.9" y="10.2" width="2.3" height="2.3" fill="#111"/><rect x="7.9" y="15.7" width="2.3" height="2.3" fill="#111"/><rect x="7.9" y="21.1" width="2.3" height="2.3" fill="#111"/><rect x="14.7" y="10.2" width="2.3" height="2.3" fill="#111"/><rect x="14.7" y="15.7" width="2.3" height="2.3" fill="#111"/><rect x="14.7" y="21.1" width="2.3" height="2.3" fill="#111"/></svg>
<svg class="b" style="left:1711px;top:1257.8px" width="32" height="32" viewBox="0 0 32 32" fill="none"><path d="M26.27 13.36 L30.22 13.75 L30.22 18.25 L26.27 18.64 L25.12 21.40 L27.65 24.46 L24.46 27.65 L21.40 25.12 L18.64 26.27 L18.25 30.22 L13.75 30.22 L13.36 26.27 L10.60 25.12 L7.54 27.65 L4.35 24.46 L6.88 21.40 L5.73 18.64 L1.78 18.25 L1.78 13.75 L5.73 13.36 L6.88 10.60 L4.35 7.54 L7.54 4.35 L10.60 6.88 L13.36 5.73 L13.75 1.78 L18.25 1.78 L18.64 5.73 L21.40 6.88 L24.46 4.35 L27.65 7.54 L25.12 10.60Z" stroke="#444" stroke-width="1.4" stroke-linejoin="round" transform="rotate(22.5 16 16)"/><circle cx="16" cy="16" r="5.6" stroke="#1f5fae" stroke-width="1.5"/></svg>
<div class="b" style="left:1763px;top:1274.2px;width:18px;height:1.6px;background:#333"></div>
<div class="b" style="left:1906.5px;top:1275.2px;width:18.5px;height:1.7px;background:#333"></div>
<div class="b" style="left:1914.9px;top:1266.8px;width:1.7px;height:18.4px;background:#333"></div>
<div class="b" style="left:1795.5px;top:1259.3px;width:100.5px;height:35.8px;border:1px solid #a9a9a9;background:#fff;box-shadow:0.5px 0.5px 0 rgba(0,0,0,.18)"></div>
<span class="n" style="left:1759px;width:95px;top:1268px">100</span>
<span class="t" style="left:1858.49px;top:1267px;font-size:22.5px;transform:scaleX(0.7568);">%</span>
<span class="t" style="left:1976.08px;top:1263px;font-size:20.5px;transform:scaleX(1.0167);">9 records</span>
<span class="t" style="left:2135.87px;top:1263px;font-size:20.5px;transform:scaleX(1.0196);">Page 1 of 1</span>
<svg class="b" style="left:2080px;top:1260px" width="220" height="30" viewBox="2080 1260 220 30" fill="none"><rect x="2084.4" y="1264.6" width="3.2" height="17.2" fill="#a3a3a3"/><path d="M2101.8 1265.4 L2093.4 1273.2 L2101.8 1281.0" stroke="#a3a3a3" stroke-width="3" fill="none"/><path d="M2124.2 1265.4 L2115.5 1273.2 L2124.2 1281.0" stroke="#a3a3a3" stroke-width="3" fill="none"/><path d="M2254.6 1265.4 L2263.4 1273.2 L2254.6 1281.0" stroke="#a3a3a3" stroke-width="3" fill="none"/><path d="M2277.0 1265.4 L2285.8 1273.2 L2277.0 1281.0" stroke="#a3a3a3" stroke-width="3" fill="none"/><rect x="2291.1" y="1264.6" width="3.2" height="17.2" fill="#a3a3a3"/></svg>
</body></html>
